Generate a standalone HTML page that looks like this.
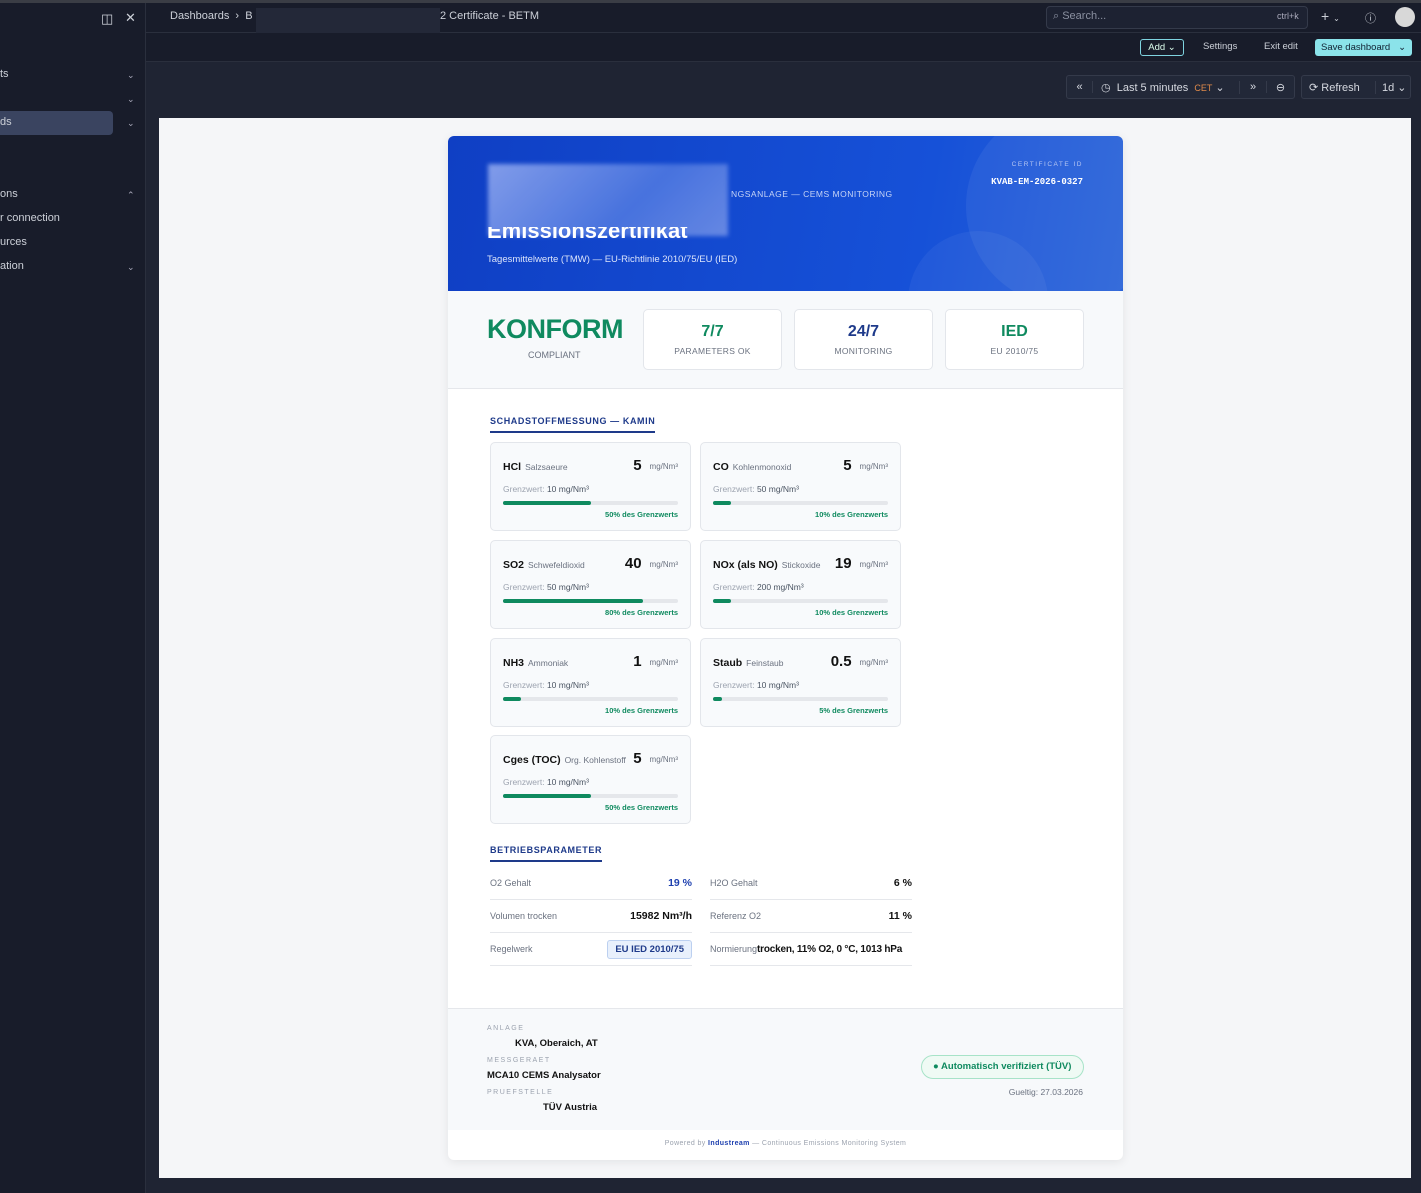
<!DOCTYPE html>
<html><head><meta charset="utf-8"><style>
*{box-sizing:border-box;margin:0;padding:0}
body{width:1421px;height:1193px;background:#1b2030;font-family:"Liberation Sans",sans-serif;position:relative;overflow:hidden;color:#ccd0d8}
.abs{position:absolute}
.topline{left:0;top:0;width:1421px;height:3px;background:#3a3d45}
.side{left:0;top:3px;width:146px;height:1190px;background:#181c2a;border-right:1px solid #2a2f3d}
.hdr{left:146px;top:3px;width:1275px;height:30px;background:#181c2a;border-bottom:1px solid #2a2f3d}
.bar2{left:146px;top:33px;width:1275px;height:29px;background:#181c2a;border-bottom:1px solid #2a2f3d}
.main{left:146px;top:62px;width:1275px;height:1131px;background:#1f2433}
.si{font-size:11px;color:#ccd0d8}
.chev{font-size:9px;color:#aab}
.btn{border:1px solid #343a4a;border-radius:3px;background:#222838;height:24px;font-size:11px;color:#d6d9e0;display:flex;align-items:center}
.panel{left:159px;top:118px;width:1252px;height:1060px;background:#f5f6f8}
.card{left:448px;top:136px;width:675px;height:1024px;background:#fff;border-radius:6px;overflow:hidden;box-shadow:0 2px 10px rgba(0,0,0,.08)}
.hero{left:0;top:0;width:675px;height:155px;background:linear-gradient(100deg,#0f3fc4,#1651d8 70%,#2a63d8);overflow:hidden}
.stat{background:#fff;border:1px solid #e3e6eb;border-radius:5px;width:139px;height:61px;top:173px;text-align:center}
.stat b{display:block;font-size:16px;margin-top:13px}
.stat span{display:block;font-size:8.5px;color:#6b7280;margin-top:5px;letter-spacing:.3px}
.m{background:#f8fafc;border:1px solid #e3e6eb;border-radius:5px;width:201px;height:89px}
.m .n{position:absolute;left:12px;top:18px;font-size:10.5px;font-weight:bold;color:#111}
.m .n i{font-style:normal;font-weight:normal;font-size:8.5px;color:#6b7280;margin-left:4px}
.m .v{position:absolute;right:12px;top:14px;font-size:15px;font-weight:bold;color:#111}
.m .v i{font-style:normal;font-weight:normal;font-size:8px;color:#6b7280;margin-left:8px;vertical-align:1px}
.m .g{position:absolute;left:12px;top:41px;font-size:8.5px;color:#9ca3af}
.m .g em{font-style:normal;color:#4b5563}
.m .t{position:absolute;left:12px;top:58px;width:175px;height:4px;background:#e5e7eb;border-radius:2px}
.m .t div{height:4px;background:#0f8a5f;border-radius:2px}
.m .p{position:absolute;right:12px;top:67px;font-size:7.5px;font-weight:bold;color:#0f8a5f}
.sec{font-size:9px;font-weight:bold;color:#1e3a8a;letter-spacing:.6px;padding-bottom:5px;border-bottom:2px solid #1e3a8a}
.row{height:33px;border-bottom:1px solid #e5e7eb;font-size:9px;color:#6b7280;display:flex;justify-content:space-between;align-items:center;width:202px;white-space:nowrap}
.row b{font-size:10.5px;color:#111}
.fl{font-size:7px;letter-spacing:1.5px;color:#9ca3af}
.fv{font-size:9.5px;font-weight:bold;color:#111}
</style></head><body>
<div class="abs topline"></div>
<div class="abs side">
 <div class="abs si" style="left:101px;top:8px;font-size:13px">◫</div>
 <div class="abs si" style="left:125px;top:7px;font-size:13px">✕</div>
 <div class="abs si" style="left:0;top:65px">ts</div><div class="abs chev" style="left:127px;top:67px">⌄</div>
 <div class="abs chev" style="left:127px;top:91px">⌄</div>
 <div class="abs" style="left:0;top:108px;width:113px;height:24px;background:#3a4460;border-radius:0 4px 4px 0"></div>
 <div class="abs si" style="left:0;top:113px">ds</div><div class="abs chev" style="left:127px;top:115px">⌄</div>
 <div class="abs si" style="left:0;top:185px">ons</div><div class="abs chev" style="left:127px;top:187px">⌃</div>
 <div class="abs si" style="left:0;top:209px">r connection</div>
 <div class="abs si" style="left:0;top:233px">urces</div>
 <div class="abs si" style="left:0;top:257px">ation</div><div class="abs chev" style="left:127px;top:259px">⌄</div>
</div>
<div class="abs hdr">
 <div class="abs si" style="left:24px;top:7px">Dashboards &nbsp;›&nbsp; B</div>
 <div class="abs" style="left:110px;top:5px;width:184px;height:37px;background:#232838"></div>
 <div class="abs si" style="left:294px;top:7px">2 Certificate - BETM</div>
 <div class="abs" style="left:900px;top:3px;width:262px;height:23px;border:1px solid #343a4a;border-radius:4px;background:#1d2232"></div>
 <div class="abs si" style="left:907px;top:7px;color:#8a90a0">⌕ Search...</div>
 <div class="abs si" style="left:1131px;top:8px;font-size:9px;color:#aab">ctrl+k</div>
 <div class="abs si" style="left:1175px;top:5px;font-size:14px">+ <span style="font-size:8px">⌄</span></div>
 <div class="abs si" style="left:1219px;top:7px">ⓘ</div>
 <div class="abs" style="left:1249px;top:4px;width:20px;height:20px;border-radius:50%;background:#d8d8d8"></div>
</div>
<div class="abs bar2">
 <div class="abs" style="left:994px;top:6px;width:44px;height:17px;border:1px solid #7fd4e0;border-radius:3px;font-size:9.5px;color:#dfe;text-align:center;line-height:15px">Add ⌄</div>
 <div class="abs si" style="left:1057px;top:8px;font-size:9.5px">Settings</div>
 <div class="abs si" style="left:1118px;top:8px;font-size:9.5px">Exit edit</div>
 <div class="abs" style="left:1169px;top:6px;width:97px;height:17px;background:#8be3ea;border-radius:3px;font-size:9.5px;color:#123;line-height:17px;padding-left:6px">Save dashboard &nbsp;&nbsp;⌄</div>
</div>
<div class="abs main">
 <div class="abs btn" style="left:920px;top:13px;width:229px">
  <span style="width:26px;text-align:center;border-right:1px solid #343a4a">«</span>
  <span style="padding-left:8px;width:147px;border-right:1px solid #343a4a">◷ &nbsp;Last 5 minutes &nbsp;<span style="color:#e08a4a;font-size:9px">CET</span> ⌄</span>
  <span style="width:27px;text-align:center;border-right:1px solid #343a4a">»</span>
  <span style="width:27px;text-align:center">⊖</span>
 </div>
 <div class="abs btn" style="left:1155px;top:13px;width:110px">
  <span style="padding-left:7px;width:74px;border-right:1px solid #343a4a">⟳ Refresh</span><span style="padding-left:6px">1d ⌄</span>
 </div>
</div>
<div class="abs panel"></div>
<div class="abs card">
 <div class="abs hero">
  <div class="abs" style="left:518px;top:-30px;width:200px;height:200px;border-radius:50%;background:rgba(255,255,255,.06)"></div>
  <div class="abs" style="left:460px;top:95px;width:140px;height:140px;border-radius:50%;background:rgba(255,255,255,.05)"></div>
  <div class="abs" style="left:40px;top:28px;width:240px;height:72px;background:linear-gradient(135deg,#8ea6ee,#4d77e0 60%,#6f8fe6);filter:blur(2px);opacity:.9"></div>
  <div class="abs" style="left:39px;top:82px;font-size:22px;font-weight:bold;color:#fff;clip-path:inset(9px 0 0 0)">Emissionszertifikat</div>
  <div class="abs" style="left:283px;top:53px;font-size:8.5px;color:#c6d4f6;letter-spacing:.5px">NGSANLAGE — CEMS MONITORING</div>
  <div class="abs" style="left:39px;top:118px;font-size:9.5px;color:#dbe4fb">Tagesmittelwerte (TMW) — EU-Richtlinie 2010/75/EU (IED)</div>
  <div class="abs" style="right:40px;top:25px;font-size:6.5px;color:#b6c6f2;letter-spacing:1.5px">CERTIFICATE ID</div>
  <div class="abs" style="right:40px;top:41px;font-size:9px;font-weight:bold;color:#fff;font-family:'Liberation Mono',monospace">KVAB-EM-2026-0327</div>
 </div>
 <div class="abs" style="left:0;top:155px;width:675px;height:98px;background:#f7f9fb;border-bottom:1px solid #e5e7eb"></div>
 <div class="abs" style="left:39px;top:178px;font-size:27px;font-weight:bold;color:#0f8a5f;letter-spacing:-.5px">KONFORM</div>
 <div class="abs" style="left:80px;top:214px;font-size:9px;color:#6b7280">COMPLIANT</div>
 <div class="abs stat" style="left:195px"><b style="color:#0f8a5f">7/7</b><span>PARAMETERS OK</span></div>
 <div class="abs stat" style="left:346px"><b style="color:#1e3a8a">24/7</b><span>MONITORING</span></div>
 <div class="abs stat" style="left:497px"><b style="color:#0f8a5f">IED</b><span>EU 2010/75</span></div>

 <div class="abs sec" style="left:42px;top:280px">SCHADSTOFFMESSUNG — KAMIN</div>

 <div class="abs m" style="left:42px;top:306px"><div class="n">HCl<i>Salzsaeure</i></div><div class="v">5<i>mg/Nm³</i></div><div class="g">Grenzwert: <em>10 mg/Nm³</em></div><div class="t"><div style="width:50%"></div></div><div class="p">50% des Grenzwerts</div></div>
 <div class="abs m" style="left:252px;top:306px"><div class="n">CO<i>Kohlenmonoxid</i></div><div class="v">5<i>mg/Nm³</i></div><div class="g">Grenzwert: <em>50 mg/Nm³</em></div><div class="t"><div style="width:10%"></div></div><div class="p">10% des Grenzwerts</div></div>
 <div class="abs m" style="left:42px;top:404px"><div class="n">SO2<i>Schwefeldioxid</i></div><div class="v">40<i>mg/Nm³</i></div><div class="g">Grenzwert: <em>50 mg/Nm³</em></div><div class="t"><div style="width:80%"></div></div><div class="p">80% des Grenzwerts</div></div>
 <div class="abs m" style="left:252px;top:404px"><div class="n">NOx (als NO)<i>Stickoxide</i></div><div class="v">19<i>mg/Nm³</i></div><div class="g">Grenzwert: <em>200 mg/Nm³</em></div><div class="t"><div style="width:10%"></div></div><div class="p">10% des Grenzwerts</div></div>
 <div class="abs m" style="left:42px;top:502px"><div class="n">NH3<i>Ammoniak</i></div><div class="v">1<i>mg/Nm³</i></div><div class="g">Grenzwert: <em>10 mg/Nm³</em></div><div class="t"><div style="width:10%"></div></div><div class="p">10% des Grenzwerts</div></div>
 <div class="abs m" style="left:252px;top:502px"><div class="n">Staub<i>Feinstaub</i></div><div class="v">0.5<i>mg/Nm³</i></div><div class="g">Grenzwert: <em>10 mg/Nm³</em></div><div class="t"><div style="width:5%"></div></div><div class="p">5% des Grenzwerts</div></div>
 <div class="abs m" style="left:42px;top:599px"><div class="n">Cges (TOC)<i>Org. Kohlenstoff</i></div><div class="v">5<i>mg/Nm³</i></div><div class="g">Grenzwert: <em>10 mg/Nm³</em></div><div class="t"><div style="width:50%"></div></div><div class="p">50% des Grenzwerts</div></div>

 <div class="abs sec" style="left:42px;top:709px">BETRIEBSPARAMETER</div>
 <div class="abs" style="left:42px;top:731px">
  <div class="row">O2 Gehalt<b style="color:#1e40af">19 %</b></div>
  <div class="row">Volumen trocken<b>15982 Nm³/h</b></div>
  <div class="row">Regelwerk<b style="font-size:9.5px;color:#1e3a8a;background:#e8f0fc;border:1px solid #bcd0f0;border-radius:3px;padding:3px 7px">EU IED 2010/75</b></div>
 </div>
 <div class="abs" style="left:262px;top:731px">
  <div class="row">H2O Gehalt<b>6 %</b></div>
  <div class="row">Referenz O2<b>11 %</b></div>
  <div class="row" style="justify-content:flex-start">Normierung<b style="font-size:10px;letter-spacing:-.2px">trocken, 11% O2, 0 °C, 1013 hPa</b></div>
 </div>

 <div class="abs" style="left:0;top:872px;width:675px;height:122px;background:#f7f9fb;border-top:1px solid #e5e7eb"></div>
 <div class="abs fl" style="left:39px;top:889px">ANLAGE</div>
 <div class="abs fv" style="left:67px;top:902px">KVA, Oberaich, AT</div>
 <div class="abs fl" style="left:39px;top:921px">MESSGERAET</div>
 <div class="abs fv" style="left:39px;top:934px">MCA10 CEMS Analysator</div>
 <div class="abs fl" style="left:39px;top:953px">PRUEFSTELLE</div>
 <div class="abs fv" style="left:95px;top:966px">TÜV Austria</div>
 <div class="abs" style="left:473px;top:919px;width:163px;height:24px;border:1px solid #a7e3c8;border-radius:12px;background:#effaf4;font-size:9.5px;font-weight:bold;color:#0f8a5f;line-height:22px;padding-left:11px">● Automatisch verifiziert (TÜV)</div>
 <div class="abs" style="right:40px;top:951px;font-size:8.5px;color:#6b7280">Gueltig: 27.03.2026</div>
 <div class="abs" style="left:0;top:1004px;width:675px;text-align:center;font-size:7px;color:#9ca3af;letter-spacing:.4px">Powered by <span style="color:#1e40af;font-weight:bold">Industream</span> — Continuous Emissions Monitoring System</div>
</div>
</body></html>
